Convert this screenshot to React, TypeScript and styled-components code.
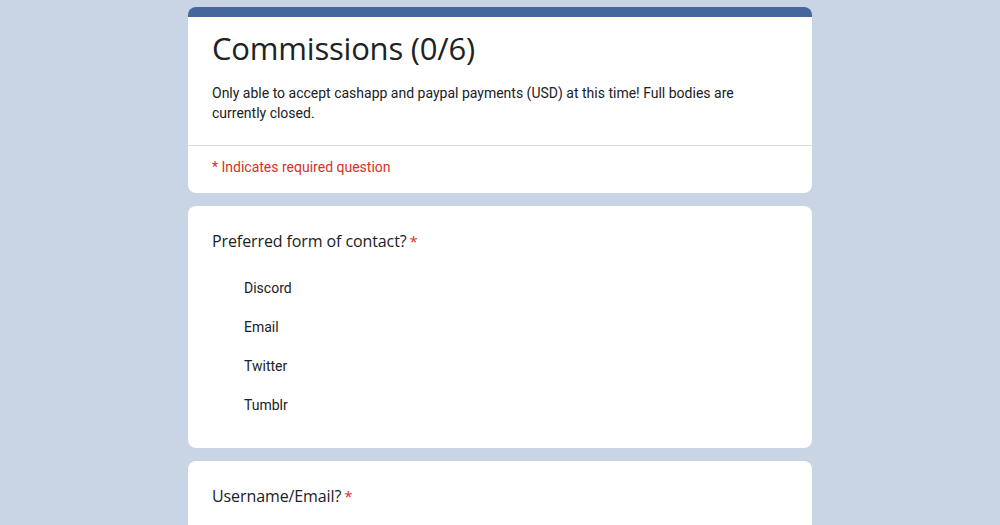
import styled, {createGlobalStyle} from "styled-components";

const Global = createGlobalStyle`
  html, body {
    margin: 0;
    padding: 0;
    background: #c9d4e5;
  }
  body {
    font-family: Roboto, "Liberation Sans", sans-serif;
    color: #202124;
  }
`

const Page = styled.div`
  display: flex;
  flex-direction: column;
  align-items: center;
  gap: 13px;
  padding-top: 7px;
  height: 525px;
  overflow: hidden;
`

const Card = styled.div<{ $head?: boolean }>`
  width: 624px;
  box-sizing: border-box;
  background: #fff;
  border-radius: 8px;
  border-top: ${p => p.$head ? '10px solid #45679a' : 'none'};
  flex-shrink: 0;
`

const Header = styled.div`
  padding: 9px 24px 22px;
`

const Title = styled.h1`
  margin: 0;
  font-family: "Open Sans", sans-serif;
  font-weight: 400;
  font-size: 31px;
  line-height: 44px;
  letter-spacing: -0.2px;
  color: #202124;
`

const Description = styled.p`
  margin: 13px 0 0;
  font-size: 14px;
  line-height: 20px;
  color: #202124;
`

const Divider = styled.div`
  border-top: 1px solid #dadce0;
`

const Required = styled.div`
  padding: 12px 24px 17px;
  font-size: 14px;
  line-height: 18px;
  color: #d93025;
`

const Question = styled.div`
  padding: 23px 24px 33px;
`

const QTitle = styled.div`
  font-family: "Open Sans", sans-serif;
  font-size: 16px;
  line-height: 24px;
  letter-spacing: -0.1px;
  color: #202124;
`

const Star = styled.span`
  color: #d93025;
  margin-left: 3px;
  font-size: 15px;
`

const Options = styled.div`
  display: flex;
  flex-direction: column;
  gap: 19px;
  margin-top: 25px;
  padding-left: 32px;
`

const Option = styled.div`
  font-size: 14px;
  line-height: 20px;
  color: #202124;
`

const contacts = ['Discord', 'Email', 'Twitter', 'Tumblr']

const App = () => {
  return (
    <>
      <Global/>
      <Page>
        <Card $head>
          <Header>
            <Title>Commissions (0/6)</Title>
            <Description>
              Only able to accept cashapp and paypal payments (USD) at this time! Full bodies are currently closed.
            </Description>
          </Header>
          <Divider/>
          <Required>* Indicates required question</Required>
        </Card>
        <Card>
          <Question>
            <QTitle>Preferred form of contact?<Star>*</Star></QTitle>
            <Options>
              {contacts.map(c => <Option key={c}>{c}</Option>)}
            </Options>
          </Question>
        </Card>
        <Card>
          <Question>
            <QTitle>Username/Email?<Star>*</Star></QTitle>
          </Question>
        </Card>
      </Page>
    </>
  )
}

export default App
